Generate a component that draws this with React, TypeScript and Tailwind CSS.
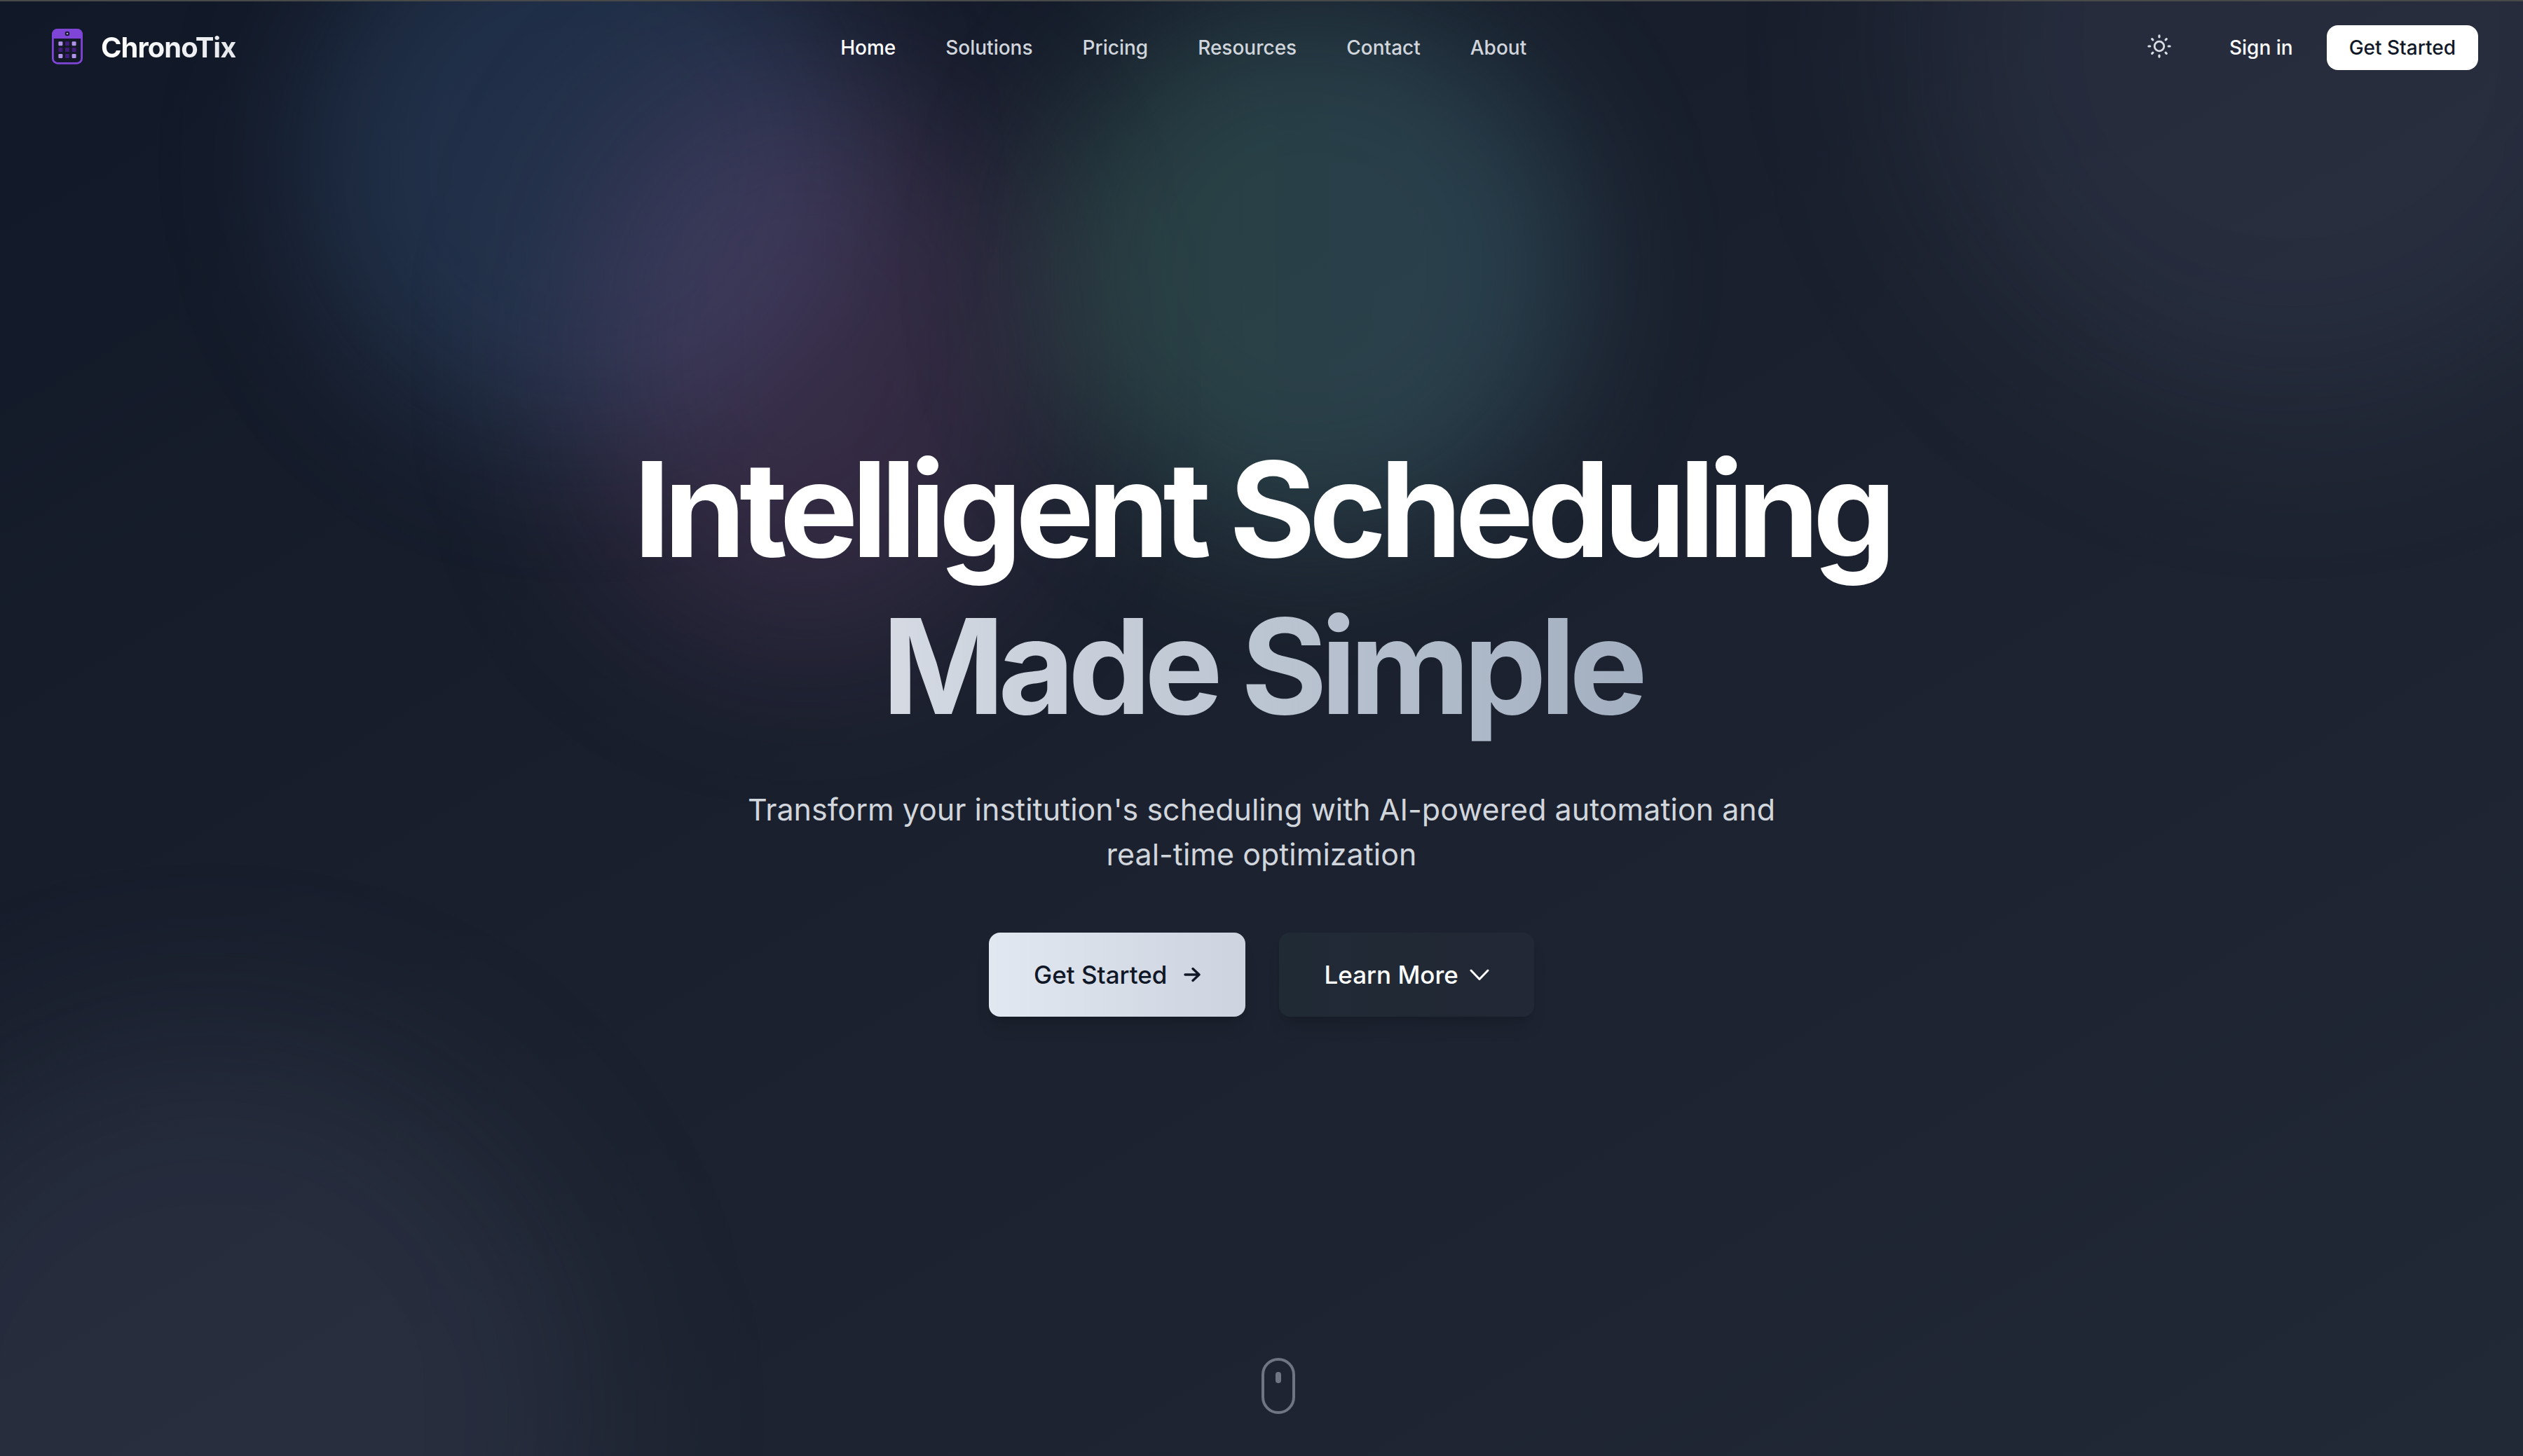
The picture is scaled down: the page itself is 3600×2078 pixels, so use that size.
import React from "react";

const nav = ["Home", "Solutions", "Pricing", "Resources", "Contact", "About"];

function Logo() {
  const cells = [0, 1, 2].flatMap((r) => [0, 1, 2].map((c) => ({ r, c })));
  return (
    <svg viewBox="0 0 44 54" className="h-[54px] w-11" aria-hidden="true">
      <rect x="1.4" y="1.4" width="41.2" height="48" rx="7" fill="#131926" stroke="#7e45d6" strokeWidth="2.8" />
      <path d="M0 14V8a8 8 0 0 1 8-8h28a8 8 0 0 1 8 8v6z" fill="#7e45d6" />
      <circle cx="22" cy="7" r="2.3" fill="#b79df0" stroke="#131926" strokeWidth="2" />
      {cells.map(({ r, c }) => (
        <rect
          key={`${r}${c}`}
          x={9.4 + c * 9.6}
          y={18.2 + r * 8.9}
          width="6"
          height="6"
          rx="1.2"
          fill={r !== 1 && c !== 1 ? "#b192ea" : "#431d7c"}
        />
      ))}
    </svg>
  );
}

function Sun() {
  return (
    <svg viewBox="0 0 36 40" className="h-10 w-9" fill="none" stroke="#d9dce2" strokeLinecap="round" aria-hidden="true">
      <circle cx="18" cy="18" r="6.8" strokeWidth="2.8" />
      <path
        strokeWidth="3.2"
        d="M18 2.9v1.9M18 31.2v1.9M2.9 18h1.9M31.2 18h1.9M7.7 7.7l1.2 1.2M27.1 27.1l1.2 1.2M7.7 28.3l1.2-1.2M27.1 8.9l1.2-1.2"
      />
    </svg>
  );
}

function ArrowRight() {
  return (
    <svg viewBox="0 0 24 24" className="size-6" fill="none" stroke="currentColor" strokeWidth="3.4" strokeLinecap="round" strokeLinejoin="round" aria-hidden="true">
      <path d="M2 12h20M13 3.6l9 8.4-9 8.4" />
    </svg>
  );
}

function ChevronDown() {
  return (
    <svg viewBox="0 0 28 28" className="size-7" fill="none" stroke="currentColor" strokeWidth="3" strokeLinecap="round" strokeLinejoin="round" aria-hidden="true">
      <path d="M2 8l12 12.5L26 8" />
    </svg>
  );
}

export default function App() {
  return (
    <div className="relative flex min-h-screen flex-col overflow-hidden border-t-2 border-[#474a48] bg-linear-to-br from-[#111827] via-[#1b212e] to-[#212836] font-['Inter',sans-serif] text-white">
      <div className="pointer-events-none absolute inset-0" aria-hidden="true">
        <div className="absolute -top-[480px] -right-[200px] size-[1060px] rounded-full bg-[#71789a]/14 blur-[128px]" />
        <div className="absolute -bottom-[480px] -left-[240px] size-[1080px] rounded-full bg-[#71789a]/14 blur-[128px]" />
        <div className="absolute -top-[170px] left-[430px] size-[800px] rounded-full bg-[#5487c8]/20 blur-[100px]" />
        <div className="absolute top-[110px] left-[840px] h-[800px] w-[620px] rounded-full bg-[#a05a9c]/22 blur-[120px]" />
        <div className="absolute top-0 left-[1490px] size-[760px] rounded-full bg-linear-to-r from-[#62b088]/24 to-[#5fa8bc]/24 blur-[100px]" />
      </div>

      <header className="relative flex items-center justify-between px-16 pt-[26px]">
        <a href="#" className="flex items-center gap-[26px] pl-2.5">
          <Logo />
          <span className="bg-linear-to-r from-white to-gray-200 bg-clip-text text-[40px] font-bold tracking-tight text-transparent">ChronoTix</span>
        </a>
        <nav className="flex gap-[71px] text-[28px] font-medium text-gray-300">
          {nav.map((n, i) => (
            <a key={n} href="#" className={i === 0 ? "text-white" : undefined}>{n}</a>
          ))}
        </nav>
        <div className="flex items-center text-[28px] font-medium">
          <button aria-label="Toggle theme" className="mr-15 flex size-20 items-center justify-center"><Sun /></button>
          <a href="#" className="mr-12">Sign in</a>
          <button className="h-16 rounded-2xl bg-white px-8 text-gray-900">Get Started</button>
        </div>
      </header>

      <main className="relative flex grow flex-col items-center pt-[507px] text-center">
        <h1 className="text-[188px] leading-[224px] font-bold tracking-tighter">
          Intelligent Scheduling
          <br />
          <span className="-mr-3 bg-linear-to-r from-[#d5dae3] to-[#a2afc0] bg-clip-text pr-3 text-transparent">Made Simple</span>
        </h1>
        <p className="mt-15 max-w-[1536px] text-[43px] leading-16 text-gray-300">
          Transform your institution's scheduling with AI-powered automation and real-time optimization
        </p>
        <div className="mt-20 flex gap-12 text-[35px] font-medium">
          <button className="flex h-30 items-center gap-6 rounded-2xl bg-linear-to-r from-slate-200 to-[#cdd3df] px-16 text-gray-900 shadow-xl">
            Get Started
            <ArrowRight />
          </button>
          <button className="flex h-30 items-center gap-4 rounded-2xl bg-linear-to-r from-[#202a35] to-[#222835] px-16 shadow-xl">
            Learn More
            <ChevronDown />
          </button>
        </div>
        <div className="mt-auto mb-15 ml-12 flex h-20 w-12 justify-center rounded-full border-4 border-[#6f7582] pt-4">
          <div className="h-4 w-2 rounded-full bg-[#6f7582]" />
        </div>
      </main>
    </div>
  );
}
